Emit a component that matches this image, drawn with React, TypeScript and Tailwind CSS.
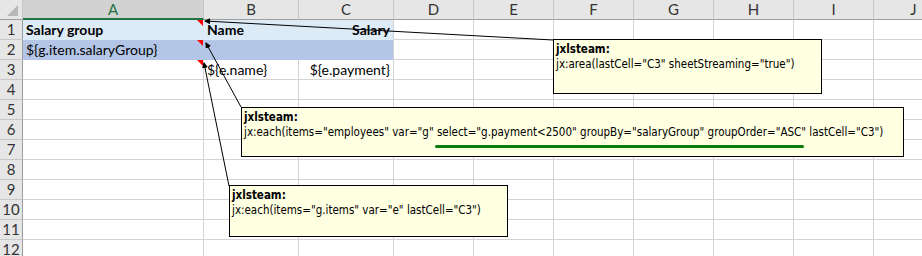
import React from "react";

const letters = ["A", "B", "C", "D", "E", "F", "G", "H", "I", "J"];
const rows = [1, 2, 3, 4, 5, 6, 7, 8, 9, 10, 11, 12];

type Cell = { text?: string; bold?: boolean; right?: boolean; note?: boolean };

const cells: Record<string, Cell> = {
  A1: { text: "Salary group", bold: true, note: true },
  B1: { text: "Name", bold: true },
  C1: { text: "Salary", bold: true, right: true },
  A2: { text: "${g.item.salaryGroup}", note: true },
  A3: { note: true },
  B3: { text: "${e.name}" },
  C3: { text: "${e.payment}", right: true },
};

function fillFor(row: number, col: number) {
  if (col > 2) return "";
  if (row === 1) return col === 2 ? "bg-[#ddebf7] border-r-[#d4d4d4] border-b-[#ddebf7]" : "bg-[#ddebf7] border-r-[#ddebf7] border-b-[#ddebf7]";
  if (row === 2) return col === 2 ? "bg-[#b4c6e7] border-r-[#d4d4d4] border-b-[#b4c6e7]" : "bg-[#b4c6e7] border-r-[#b4c6e7] border-b-[#b4c6e7]";
  return "";
}

function Comment({ className, body }: { className: string; body: string }) {
  return (
    <div
      className={`absolute border border-black bg-[#ffffe1] pl-[2px] pt-[2px] text-[11.5px] leading-[15px] text-black ${className}`}
      style={{ fontFamily: "Tahoma, 'DejaVu Sans Condensed', 'Liberation Sans', sans-serif" }}
    >
      <div className="font-bold">jxlsteam:</div>
      <div className="whitespace-nowrap">{body}</div>
    </div>
  );
}

export default function App() {
  return (
    <div
      className="relative h-[256px] w-[922px] overflow-hidden bg-white text-black"
      style={{ fontFamily: "Lato, 'Open Sans', sans-serif" }}
    >
      <div className="grid grid-cols-[23px_181px_95px_95px_80px_80px_80px_80px_80px_80px_80px]">
        {/* corner */}
        <div className="relative h-[20px] border-r border-b border-r-[#c8c8c8] border-b-[#9e9e9e] bg-[#e6e6e6]">
          <div className="absolute right-[4px] bottom-[3px] h-0 w-0 border-b-[11px] border-l-[11px] border-b-[#b8b8b8] border-l-transparent" />
        </div>
        {letters.map((l) =>
          l === "A" ? (
            <div
              key={l}
              className="flex h-[20px] items-center justify-center border-r border-b-2 border-r-[#c8c8c8] border-b-[#217346] bg-[#d2d2d2] text-[15px] text-[#217346]"
            >
              {l}
            </div>
          ) : (
            <div
              key={l}
              className="flex h-[20px] items-center justify-center border-r border-b border-r-[#c8c8c8] border-b-[#9e9e9e] bg-[#e6e6e6] text-[15px] text-[#333]"
            >
              {l}
            </div>
          )
        )}
        {rows.map((r) => (
          <React.Fragment key={r}>
            <div className="flex h-[20px] items-center justify-center border-r border-b border-r-[#9e9e9e] border-b-[#c8c8c8] bg-[#e6e6e6] text-[15px] text-[#333]">
              {r}
            </div>
            {letters.map((l, ci) => {
              const c = cells[`${l}${r}`];
              return (
                <div
                  key={l}
                  className={`relative flex h-[20px] items-center whitespace-nowrap border-r border-b border-[#d4d4d4] px-[3px] text-[14px] ${fillFor(r, ci)} ${c?.right ? "justify-end" : "justify-start"} ${c?.bold ? "font-bold" : ""}`}
                >
                  {c?.text}
                  {c?.note && (
                    <div className="absolute top-0 right-0 h-0 w-0 border-t-[6px] border-l-[6px] border-t-[#ff0000] border-l-transparent" />
                  )}
                </div>
              );
            })}
          </React.Fragment>
        ))}
      </div>

      {/* connector lines from the notes to their cells */}
      <svg className="pointer-events-none absolute inset-0" width="922" height="256">
        <defs>
          <marker id="head" markerWidth="6" markerHeight="6" refX="5" refY="3" orient="auto" markerUnits="userSpaceOnUse">
            <path d="M0,0 L6,3 L0,6 Z" fill="#000" />
          </marker>
        </defs>
        <line x1="553" y1="40" x2="205" y2="21" stroke="#000" strokeWidth="1" markerEnd="url(#head)" />
        <line x1="241" y1="107" x2="206" y2="43" stroke="#000" strokeWidth="1" markerEnd="url(#head)" />
        <line x1="229" y1="186" x2="204" y2="63" stroke="#000" strokeWidth="1" markerEnd="url(#head)" />
      </svg>

      <Comment className="left-[553px] top-[39px] h-[55px] w-[269px]" body={'jx:area(lastCell="C3" sheetStreaming="true")'} />
      <Comment
        className="left-[241px] top-[107px] h-[50px] w-[663px]"
        body={'jx:each(items="employees" var="g" select="g.payment<2500" groupBy="salaryGroup" groupOrder="ASC" lastCell="C3")'}
      />
      <Comment className="left-[229px] top-[185px] h-[52px] w-[279px]" body={'jx:each(items="g.items" var="e" lastCell="C3")'} />

      {/* highlight under the select / groupBy part */}
      <div className="absolute left-[435px] top-[145px] h-[3px] w-[369px] rounded-full bg-[#0a7d0a]" />
    </div>
  );
}
